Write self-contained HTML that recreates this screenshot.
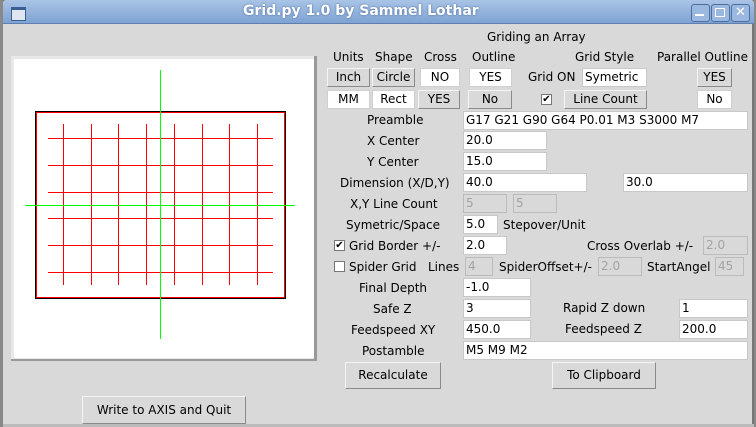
<!DOCTYPE html><html><head><style>
body{margin:0;width:756px;height:427px;overflow:hidden;background:#888;font-family:"DejaVu Sans","Liberation Sans",sans-serif;font-size:12px;color:#000;position:relative}
.a{position:absolute}
.t{position:absolute;white-space:nowrap;line-height:14px}
.e{position:absolute;background:#fff;border:1px solid #c8c8c8;box-sizing:border-box;height:19px;line-height:17px;padding-left:2px;white-space:nowrap}
.d{position:absolute;background:#d9d9d9;border:1px solid #bbb;box-sizing:border-box;height:19px;line-height:17px;padding-left:2px;color:#a3a3a3}
.b{position:absolute;background:#d9d9d9;border:1px solid;border-color:#f4f4f4 #8a8a8a #8a8a8a #f4f4f4;box-sizing:border-box;height:19px;line-height:17px;text-align:center}
.w{position:absolute;background:#fff;border:1px solid #d0d0d0;box-sizing:border-box;height:19px;line-height:17px;text-align:center}
.c{position:absolute;width:11px;height:11px;background:#fff;border:1px solid #777;box-sizing:border-box;font-size:10px;line-height:9px;text-align:center}
</style></head><body>
<div class="a" style="left:3px;top:0;width:751px;height:427px;background:#d9d9d9;border-radius:4px 4px 0 0"></div>
<div class="a" style="left:3px;top:0;width:751px;height:23px;background:linear-gradient(#a9c4e6,#7ea3d3);border-radius:5px 5px 0 0;border-bottom:1px solid #5f7fae"></div>
<div class="a" style="left:11px;top:7px;width:13px;height:10px;border:1px solid #3a5f94;background:#dfe6ef;border-top-width:3px"></div>
<div class="t" style="left:243px;top:4px;font-weight:bold;font-size:14px;color:#fff;text-shadow:0 0 2px #4a6a9a">Grid.py 1.0 by Sammel Lothar</div>
<div class="a" style="left:691px;top:4px;width:17px;height:16px;border:1px solid #4d6e9e;border-radius:3px;background:#9bb9e0"></div>
<div class="a" style="left:711px;top:4px;width:17px;height:16px;border:1px solid #4d6e9e;border-radius:3px;background:#9bb9e0"></div>
<div class="a" style="left:731px;top:4px;width:17px;height:16px;border:1px solid #4d6e9e;border-radius:3px;background:#9bb9e0;color:#fff;font-size:13px;text-align:center;line-height:16px;font-weight:bold">✕</div>
<div class="a" style="left:695px;top:14px;width:9px;height:2px;background:#fff"></div>
<div class="a" style="left:715px;top:8px;width:8px;height:7px;border:1px solid #fff"></div>
<div class="a" style="left:752px;top:24px;width:2px;height:403px;background:#777"></div>
<div class="a" style="left:3px;top:424px;width:751px;height:3px;background:#bbb"></div>

<div class="a" style="left:11px;top:56px;width:306px;height:305px;background:#e8e8e8;border-bottom:2px solid #999;border-right:3px solid #999;box-sizing:border-box"></div>
<svg class="a" style="left:14px;top:59px" width="300" height="299" viewBox="14 59 300 299" shape-rendering="crispEdges">
<rect x="14" y="59" width="300" height="299" fill="#fff"/>
<rect x="35.5" y="111.5" width="250" height="187" fill="none" stroke="#000" stroke-width="1"/>
<rect x="36.5" y="112.5" width="248" height="185" fill="none" stroke="#f00" stroke-width="1"/>
<g stroke="#f00" stroke-width="1">
<path d="M63.5 124V285M91.5 124V285M118.5 124V285M146.5 124V285M174.5 124V285M202.5 124V285M229.5 124V285M257.5 124V285"/>
<path d="M48 138.5H273M48 165.5H273M48 192.5H273M48 218.5H273M48 245.5H273M48 272.5H273"/>
</g>
<g stroke="#0f0" stroke-width="1"><path d="M160.5 70V339M25 205.5H295"/></g>
</svg>

<div class="t" style="left:487px;top:30px">Griding an Array</div>
<div class="t" style="left:333px;top:50px">Units</div>
<div class="t" style="left:375px;top:50px">Shape</div>
<div class="t" style="left:424px;top:50px">Cross</div>
<div class="t" style="left:472px;top:50px">Outline</div>
<div class="t" style="left:575px;top:50px">Grid Style</div>
<div class="t" style="left:657px;top:50px">Parallel Outline</div>
<div class="b" style="left:327px;top:68px;width:43px">Inch</div>
<div class="b" style="left:372px;top:68px;width:43px">Circle</div>
<div class="w" style="left:420px;top:68px;width:40px">NO</div>
<div class="w" style="left:469px;top:68px;width:43px">YES</div>
<div class="t" style="left:528px;top:70px">Grid ON</div>
<div class="e" style="left:582px;top:68px;width:65px">Symetric</div>
<div class="b" style="left:697px;top:68px;width:35px">YES</div>
<div class="w" style="left:327px;top:90px;width:43px">MM</div>
<div class="w" style="left:372px;top:90px;width:43px">Rect</div>
<div class="b" style="left:418px;top:90px;width:42px">YES</div>
<div class="b" style="left:468px;top:90px;width:44px">No</div>
<div class="c" style="left:541px;top:94px">✔</div>
<div class="b" style="left:564px;top:90px;width:83px">Line Count</div>
<div class="w" style="left:697px;top:90px;width:35px">No</div>

<div class="t" style="left:367px;top:113px">Preamble</div><div class="e" style="left:463px;top:111px;width:285px">G17 G21 G90 G64 P0.01 M3 S3000 M7</div>
<div class="t" style="left:367px;top:134px">X Center</div><div class="e" style="left:463px;top:131px;width:84px">20.0</div>
<div class="t" style="left:367px;top:155px">Y Center</div><div class="e" style="left:463px;top:152px;width:84px">15.0</div>
<div class="t" style="left:340px;top:176px">Dimension (X/D,Y)</div><div class="e" style="left:463px;top:173px;width:124px">40.0</div><div class="e" style="left:623px;top:173px;width:125px">30.0</div>
<div class="t" style="left:350px;top:197px">X,Y Line Count</div><div class="d" style="left:463px;top:194px;width:44px">5</div><div class="d" style="left:513px;top:194px;width:44px">5</div>
<div class="t" style="left:346px;top:218px">Symetric/Space</div><div class="e" style="left:463px;top:215px;width:35px">5.0</div><div class="t" style="left:503px;top:218px">Stepover/Unit</div>
<div class="c" style="left:334px;top:240px">✔</div><div class="t" style="left:349px;top:239px">Grid Border +/-</div><div class="e" style="left:463px;top:236px;width:44px">2.0</div>
<div class="t" style="left:587px;top:239px">Cross Overlab +/-</div><div class="d" style="left:703px;top:236px;width:45px">2.0</div>
<div class="c" style="left:334px;top:261px"></div><div class="t" style="left:349px;top:260px">Spider Grid</div><div class="t" style="left:428px;top:260px">Lines</div><div class="d" style="left:465px;top:257px;width:28px">4</div>
<div class="t" style="left:499px;top:260px">SpiderOffset+/-</div><div class="d" style="left:598px;top:257px;width:44px">2.0</div>
<div class="t" style="left:647px;top:260px">StartAngel</div><div class="d" style="left:715px;top:257px;width:29px">45</div>
<div class="t" style="left:359px;top:281px">Final Depth</div><div class="e" style="left:463px;top:278px;width:68px">-1.0</div>
<div class="t" style="left:373px;top:302px">Safe Z</div><div class="e" style="left:463px;top:299px;width:68px">3</div>
<div class="t" style="left:563px;top:301px">Rapid Z down</div><div class="e" style="left:679px;top:299px;width:69px">1</div>
<div class="t" style="left:351px;top:323px">Feedspeed XY</div><div class="e" style="left:463px;top:320px;width:68px">450.0</div>
<div class="t" style="left:565px;top:322px">Feedspeed Z</div><div class="e" style="left:679px;top:320px;width:69px">200.0</div>
<div class="t" style="left:362px;top:344px">Postamble</div><div class="e" style="left:463px;top:341px;width:285px">M5 M9 M2</div>
<div class="b" style="left:345px;top:362px;width:96px;height:27px;line-height:25px">Recalculate</div>
<div class="b" style="left:552px;top:362px;width:104px;height:27px;line-height:25px">To Clipboard</div>
<div class="b" style="left:82px;top:396px;width:164px;height:28px;line-height:26px">Write to AXIS and Quit</div>
</body></html>
